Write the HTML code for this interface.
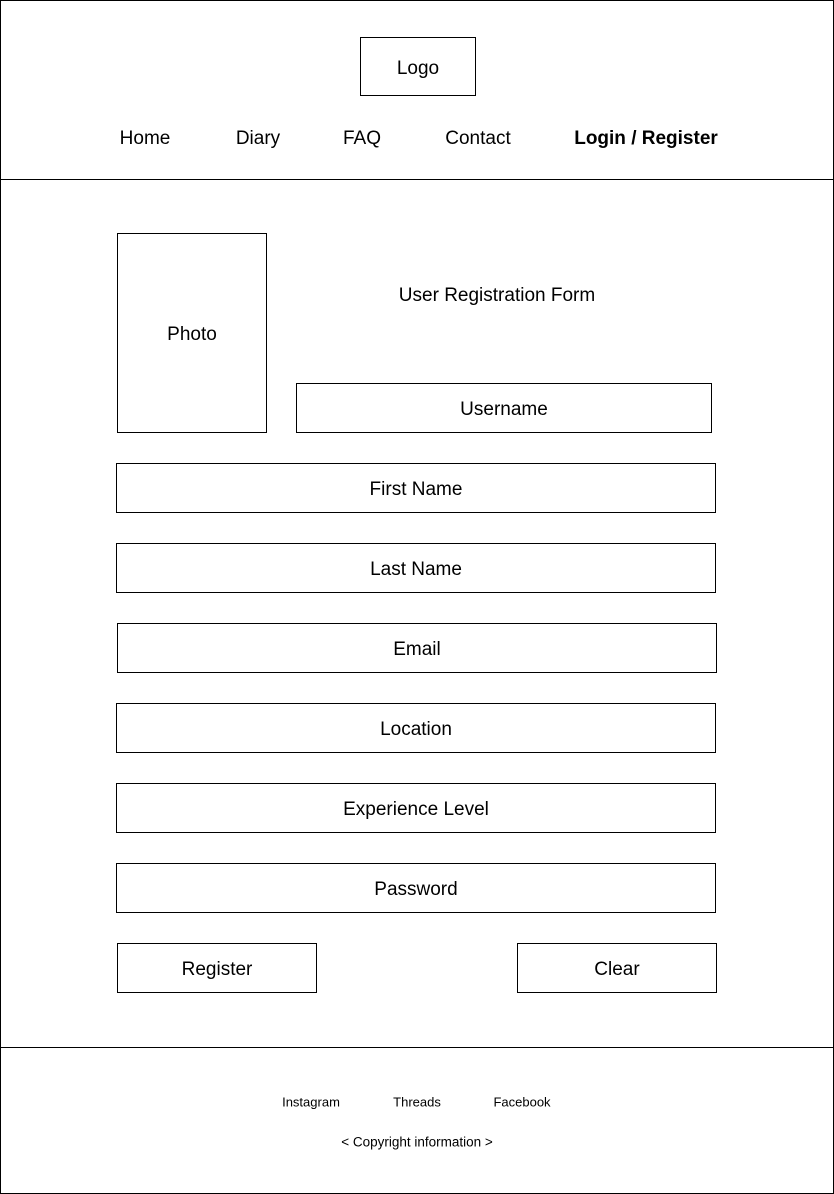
<!DOCTYPE html>
<html><head><meta charset="utf-8"><style>
*{margin:0;padding:0;box-sizing:border-box}
body{width:834px;height:1194px;background:#fff;font-family:"Liberation Sans",sans-serif;color:#000;position:relative;overflow:hidden}
.b{position:absolute;border:1px solid #000;display:flex;align-items:center;justify-content:center;font-size:19px;padding-top:4px}
.t{position:absolute;font-size:19px;white-space:nowrap;transform:translate(-50%,-50%)}
.s{position:absolute;font-size:13px;white-space:nowrap;transform:translate(-50%,-50%)}
.h{position:absolute;left:0;width:834px;height:1px;background:#000}
</style></head><body>
<div class="b" style="left:0;top:0;width:834px;height:1194px"></div>
<div class="h" style="top:179px"></div>
<div class="h" style="top:1047px"></div>
<div class="b" style="left:360px;top:37px;width:116px;height:59px">Logo</div>
<div class="t" style="left:145px;top:139px">Home</div>
<div class="t" style="left:258px;top:139px">Diary</div>
<div class="t" style="left:362px;top:139px">FAQ</div>
<div class="t" style="left:478px;top:139px">Contact</div>
<div class="t" style="left:646px;top:139px;font-weight:bold">Login / Register</div>
<div class="b" style="left:117px;top:233px;width:150px;height:200px">Photo</div>
<div class="t" style="left:497px;top:296px">User Registration Form</div>
<div class="b" style="left:296px;top:383px;width:416px;height:50px">Username</div>
<div class="b" style="left:116px;top:463px;width:600px;height:50px">First Name</div>
<div class="b" style="left:116px;top:543px;width:600px;height:50px">Last Name</div>
<div class="b" style="left:117px;top:623px;width:600px;height:50px">Email</div>
<div class="b" style="left:116px;top:703px;width:600px;height:50px">Location</div>
<div class="b" style="left:116px;top:783px;width:600px;height:50px">Experience Level</div>
<div class="b" style="left:116px;top:863px;width:600px;height:50px">Password</div>
<div class="b" style="left:117px;top:943px;width:200px;height:50px">Register</div>
<div class="b" style="left:517px;top:943px;width:200px;height:50px">Clear</div>
<div class="s" style="left:311px;top:1102px">Instagram</div>
<div class="s" style="left:417px;top:1102px">Threads</div>
<div class="s" style="left:522px;top:1102px">Facebook</div>
<div class="s" style="left:417px;top:1142px;font-size:13.5px">&lt; Copyright information &gt;</div>
</body></html>
